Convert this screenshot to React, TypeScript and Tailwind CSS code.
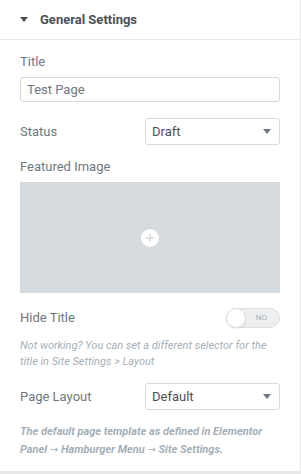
const font = { fontFamily: 'Roboto, "Liberation Sans", sans-serif' }

function Caret({ className = '' }: { className?: string }) {
  return (
    <svg width="8" height="5" viewBox="0 0 8 5" className={className}>
      <path d="M0 0h8L4 5z" fill="currentColor" />
    </svg>
  )
}

function Select({ value }: { value: string }) {
  return (
    <div className="flex h-[27px] w-[135px] items-center justify-between rounded-[3px] border border-[#d5dadf] bg-white pl-[6px] pr-[8px] text-[13px] text-[#495157]">
      <span>{value}</span>
      <Caret className="text-[#6d7882]" />
    </div>
  )
}

function Arrow() {
  return <span className="font-['DejaVu_Sans',sans-serif] text-[10px] font-normal not-italic">→</span>
}

export default function App() {
  return (
    <div className="h-[474px] w-[301px] bg-[#e6e8ea]" style={font}>
      <div className="h-[471px] w-[301px] border-r border-[#e6e9ec] bg-white">
        <div className="flex h-[40px] items-center border-b border-[#e6e9ec] pl-[20px]">
          <Caret className="text-[#495157]" />
          <span className="ml-[12px] text-[13px] font-bold text-[#495157]">General Settings</span>
        </div>

        <div className="px-[20px] pt-[14px] text-[13px] text-[#6d7882]">
          <div className="leading-[15px]">Title</div>
          <div className="mt-[8px] flex h-[25px] items-center rounded-[3px] border border-[#d5dadf] px-[6px] leading-none">
            Test Page
          </div>

          <div className="mt-[16px] flex items-center justify-between">
            <span>Status</span>
            <Select value="Draft" />
          </div>

          <div className="mt-[14px] leading-[15px]">Featured Image</div>
          <div className="mt-[8px] flex h-[111px] items-center justify-center bg-[#d5dadf]">
            <div className="flex h-[18px] w-[18px] items-center justify-center rounded-full bg-white">
              <svg width="10" height="10" viewBox="0 0 10 10">
                <path d="M5 1v8M1 5h8" stroke="#d5dadf" strokeWidth="1.6" />
              </svg>
            </div>
          </div>

          <div className="mt-[15px] flex items-center justify-between">
            <span>Hide Title</span>
            <div className="relative flex h-[20px] w-[54px] items-center justify-end rounded-full border border-[#dcdfe2] bg-[#eceef0] pr-[12px]">
              <div className="absolute left-[-1px] top-[-1px] h-[20px] w-[20px] rounded-full border border-[#dcdfe2] bg-white shadow-[0_1px_2px_rgba(0,0,0,0.08)]" />
              <span className="text-[8px] text-[#a4afb7]">NO</span>
            </div>
          </div>

          <p className="mt-[10px] text-[11px] italic leading-[16px] text-[#a4afb7]">
            Not working? You can set a different selector for the title in Site Settings &gt; Layout
          </p>

          <div className="mt-[13px] flex items-center justify-between">
            <span>Page Layout</span>
            <Select value="Default" />
          </div>

          <p className="mt-[13px] text-[11px] font-bold italic leading-[18px] text-[#a4afb7]">
            The default page template as defined in Elementor Panel <Arrow /> Hamburger Menu <Arrow /> Site Settings.
          </p>
        </div>
      </div>
    </div>
  )
}
